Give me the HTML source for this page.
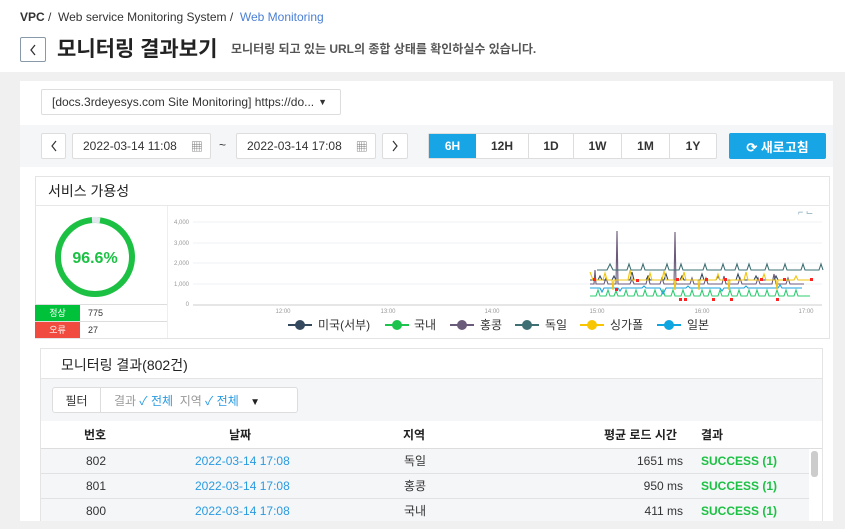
<!DOCTYPE html>
<html><head><meta charset="utf-8">
<style>
*{margin:0;padding:0;box-sizing:border-box}
body{width:845px;height:529px;overflow:hidden;background:#f0f0f0;font-family:"Liberation Sans","Noto Sans CJK KR",sans-serif;color:#333;position:relative}
.abs{position:absolute}
.hdr{left:0;top:0;width:845px;height:72px;background:#fff}
.btn{position:absolute;background:#fff;border:1px solid #ddd;border-radius:2px;font-size:12px;display:flex;align-items:center;justify-content:center}
.row{position:relative;height:25px;border-bottom:1px solid #e2e2e2;line-height:24px}
.row span{position:absolute;top:0}
</style></head><body>
<div class="abs hdr">
 <div class="abs" style="left:20px;top:10px;font-size:12px;color:#333"><b>VPC</b> / &nbsp;Web service Monitoring System / &nbsp;<span style="color:#4a7fd4">Web Monitoring</span></div>
 <div class="abs" style="left:20px;top:37px;width:26px;height:25px;border:1px solid #8899aa;border-radius:2px;display:flex;align-items:center;justify-content:center"><svg width="10" height="14"><path d="M7 2 L3 7 L7 12" fill="none" stroke="#333" stroke-width="1.3"/></svg></div>
 <div class="abs" style="left:57px;top:33px;font-size:21px;font-weight:bold;color:#222">모니터링 결과보기</div>
 <div class="abs" style="left:231px;top:40px;font-size:12px;color:#555;font-weight:bold">모니터링 되고 있는 URL의 종합 상태를 확인하실수 있습니다.</div>
</div>
<div class="abs" style="left:20px;top:81px;width:813px;height:448px;background:#fff"></div>
<div class="abs" style="left:20px;top:125px;width:813px;height:42px;background:#f5f6f8"></div>
<div class="btn" style="left:41px;top:89px;width:300px;height:26px;justify-content:flex-start;padding-left:10px;color:#333">[docs.3rdeyesys.com Site Monitoring] https://do...<span style="font-size:9px;margin-left:4px">▼</span></div>
<div class="btn" style="left:41px;top:133px;width:25px;height:26px"><svg width="10" height="14"><path d="M7 2 L3 7 L7 12" fill="none" stroke="#333" stroke-width="1.2"/></svg></div>
<div class="btn" style="left:72px;top:133px;width:139px;height:26px;justify-content:flex-start;padding-left:10px">2022-03-14 11:08<span style="margin-left:14px;color:#777">▦</span></div>
<div class="abs" style="left:219px;top:138px;font-size:12px">~</div>
<div class="btn" style="left:236px;top:133px;width:140px;height:26px;justify-content:flex-start;padding-left:10px">2022-03-14 17:08<span style="margin-left:14px;color:#777">▦</span></div>
<div class="btn" style="left:382px;top:133px;width:26px;height:26px"><svg width="10" height="14"><path d="M3 2 L7 7 L3 12" fill="none" stroke="#333" stroke-width="1.2"/></svg></div>
<div class="abs" style="left:428px;top:133px;width:289px;height:26px;display:flex;border:1px solid #ddd;border-radius:2px;background:#fff;font-size:12px;font-weight:bold">
 <div style="width:47px;background:#17a5e6;color:#fff;display:flex;align-items:center;justify-content:center">6H</div>
 <div style="width:53px;border-right:1px solid #ddd;display:flex;align-items:center;justify-content:center">12H</div>
 <div style="width:45px;border-right:1px solid #ddd;display:flex;align-items:center;justify-content:center">1D</div>
 <div style="width:48px;border-right:1px solid #ddd;display:flex;align-items:center;justify-content:center">1W</div>
 <div style="width:48px;border-right:1px solid #ddd;display:flex;align-items:center;justify-content:center">1M</div>
 <div style="flex:1;display:flex;align-items:center;justify-content:center">1Y</div>
</div>
<div class="abs" style="left:729px;top:133px;width:97px;height:26px;background:#17a5e6;border-radius:2px;color:#fff;font-size:13px;font-weight:bold;display:flex;align-items:center;justify-content:center">⟳ 새로고침</div>

<div class="abs" style="left:35px;top:176px;width:795px;height:163px;border:1px solid #e4e4e4;background:#fff"></div>
<div class="abs" style="left:35px;top:205px;width:795px;height:1px;background:#e8e8e8"></div>
<div class="abs" style="left:48px;top:181px;font-size:14px;color:#222">서비스 가용성</div>
<div class="abs" style="left:167px;top:206px;width:1px;height:132px;background:#eee"></div>
<svg class="abs" style="left:35px;top:206px" width="132" height="100"><circle cx="60" cy="51" r="37" fill="none" stroke="#1cc144" stroke-width="6"/><path d="M57 14 A37 37 0 0 1 65 14.3" fill="none" stroke="#e2e8ee" stroke-width="6"/><text x="60" y="57" text-anchor="middle" font-size="16" font-weight="bold" fill="#1cc144" font-family="Liberation Sans">96.6%</text></svg>
<div class="abs" style="left:35px;top:304px;width:132px;height:1px;background:#ddd"></div>
<div class="abs" style="left:35px;top:305px;width:45px;height:16px;background:#00c13a;color:#fff;font-size:9px;text-align:center;line-height:16px">정상</div>
<div class="abs" style="left:88px;top:305px;font-size:9px;line-height:16px">775</div>
<div class="abs" style="left:35px;top:321px;width:132px;height:1px;background:#ddd"></div>
<div class="abs" style="left:35px;top:322px;width:45px;height:16px;background:#f04b3e;color:#fff;font-size:9px;text-align:center;line-height:16px">오류</div>
<div class="abs" style="left:88px;top:322px;font-size:9px;line-height:16px">27</div>

<svg class="abs" style="left:0;top:0" width="845" height="345" font-family="Liberation Sans" font-size="6" fill="#999">
<g stroke="#eef0f5" stroke-width="1"><line x1="193" y1="222" x2="822" y2="222"/><line x1="193" y1="243" x2="822" y2="243"/><line x1="193" y1="263" x2="822" y2="263"/><line x1="193" y1="284" x2="822" y2="284"/></g>
<line x1="193" y1="305" x2="822" y2="305" stroke="#ccc"/>
<text x="189" y="224" text-anchor="end">4,000</text><text x="189" y="245" text-anchor="end">3,000</text><text x="189" y="265" text-anchor="end">2,000</text><text x="189" y="286" text-anchor="end">1,000</text><text x="189" y="306" text-anchor="end">0</text>
<g text-anchor="middle"><text x="283" y="313">12:00</text><text x="388" y="313">13:00</text><text x="492" y="313">14:00</text><text x="597" y="313">15:00</text><text x="702" y="313">16:00</text><text x="806" y="313">17:00</text></g>
<text x="798" y="215" font-size="9" fill="#8ab">⌐ ⌙</text>
<g fill="none" stroke-width="1.1">
<path stroke="#2ecc71" d="M590,296 h6 l2,-6 l2,6 h6 l2,-6 l2,6 h4 l2,-5 l2,5 h6 l2,-6 l2,6 h6 l2,-6 l2,6 h5 l2,-6 l2,6 h6 l2,-6 l2,6 h4 l2,-6 l2,6 h6 l2,-6 l2,6 h6 l2,-6 l2,6 h5 l2,-6 l2,6 h6 l2,-6 l2,6 h4 l2,-6 l2,6 h6 l2,-6 l2,6 h6 l2,-6 l2,6 h5 l2,-6 l2,6 h6 l2,-6 l2,6 h4 l2,-6 l2,6 h6 l2,-6 l2,6 h6 l2,-6 l2,6 h5 l2,-6 l2,6 h6 l2,-6 l2,6 h12"/>
<path stroke="#1ba3dd" d="M590,288 h10 l2,4 l2,-4 h14 l2,3 l2,-3 h20 l2,-2 l2,2 h14 l3,6 l3,-6 h20 l2,-2 l2,2 h30 l2,3 l2,-3 h20 l2,-2 l2,2 h30 l2,-3 l2,3 h20"/>
<path stroke="#6b5b7b" d="M590,284 h4 l1,-14 l1,14 h8 l2,-6 l2,6 h8 l1,-53 l1,53 h12 l2,-5 l2,5 h12 l2,-8 l2,8 h10 l2,-6 l2,6 h10 l1,-52 l1,52 h14 l2,-6 l2,6 h10 l2,-6 l2,6 h14 l2,-8 l2,8 h12 l2,-6 l2,6 h14 l2,-6 l2,6 h12 l2,-10 l2,10 h10 l2,-6 l2,6 h14"/>
<path stroke="#34495e" d="M590,280 h8 l2,-4 l2,4 h10 l2,-4 l2,4 h14 l2,-8 l2,8 h12 l2,-4 l2,4 h14 l2,-6 l2,6 h12 l2,-4 l2,4 h16 l2,-6 l2,6 h12 l2,-4 l2,4 h16 l2,-6 l2,6 h14 l2,-4 l2,4 h16 l2,-4 l2,4 h12"/>
<path stroke="#f1c40f" d="M590,272 l3,8 h10 l2,-7 l2,7 h5 l1,10 l1,-10 h14 l2,-10 l2,10 h16 l2,-7 l2,7 h10 l2,-9 l2,9 h8 l1,10 l1,-10 h6 l2,-8 l2,8 h12 l1,10 l1,-10 h16 l2,-6 l2,6 h8 l1,10 l1,-10 h14 l2,-8 l2,8 h14 l2,-6 l2,6 h10 l1,10 l1,-10 h16 l2,-4 l2,4 h14"/>
<path stroke="#3d6f73" d="M597,270 h10 l3,-6 l3,6 h14 l2,-6 l2,6 h10 l2,-6 l2,6 h20 l2,-6 l2,6 h10 l2,-6 l2,6 h20 l2,-6 l2,6 h14 l2,-6 l2,6 h10 l2,-6 l2,6 h8 l2,-6 l2,6 h14 l2,-6 l2,6 h14 l2,-6 l2,6 h14 l2,-6 l2,6 h14 l2,-6 l2,6"/>
</g>
<g fill="#f22"><rect x="593" y="278" width="3" height="3"/><rect x="615" y="288" width="3" height="3"/><rect x="636" y="279" width="3" height="3"/><rect x="676" y="278" width="3" height="3"/><rect x="679" y="298" width="3" height="3"/><rect x="684" y="298" width="3" height="3"/><rect x="705" y="278" width="3" height="3"/><rect x="712" y="298" width="3" height="3"/><rect x="724" y="278" width="3" height="3"/><rect x="730" y="298" width="3" height="3"/><rect x="760" y="278" width="3" height="3"/><rect x="776" y="298" width="3" height="3"/><rect x="783" y="278" width="3" height="3"/><rect x="810" y="278" width="3" height="3"/></g>
<g font-size="12" fill="#333" font-family="Liberation Sans,Noto Sans CJK KR">
<line x1="288" y1="325" x2="312" y2="325" stroke="#34495e" stroke-width="2"/><circle cx="300" cy="325" r="5" fill="#34495e"/><text x="318" y="329">미국(서부)</text>
<line x1="385" y1="325" x2="409" y2="325" stroke="#1cc44e" stroke-width="2"/><circle cx="397" cy="325" r="5" fill="#1cc44e"/><text x="414" y="329">국내</text>
<line x1="450" y1="325" x2="474" y2="325" stroke="#6b5b7b" stroke-width="2"/><circle cx="462" cy="325" r="5" fill="#6b5b7b"/><text x="480" y="329">홍콩</text>
<line x1="515" y1="325" x2="539" y2="325" stroke="#3d6f73" stroke-width="2"/><circle cx="527" cy="325" r="5" fill="#3d6f73"/><text x="545" y="329">독일</text>
<line x1="580" y1="325" x2="604" y2="325" stroke="#f7c600" stroke-width="2"/><circle cx="592" cy="325" r="5" fill="#f7c600"/><text x="610" y="329">싱가폴</text>
<line x1="657" y1="325" x2="681" y2="325" stroke="#0ea5e0" stroke-width="2"/><circle cx="669" cy="325" r="5" fill="#0ea5e0"/><text x="687" y="329">일본</text>
</g>
</svg>

<div class="abs" style="left:40px;top:348px;width:783px;height:181px;border:1px solid #e4e4e4;background:#fff"></div>
<div class="abs" style="left:41px;top:378px;width:781px;height:43px;background:#f5f6f8;border-top:1px solid #e4e4e4"></div>
<div class="abs" style="left:61px;top:355px;font-size:14px;color:#222">모니터링 결과(802건)</div>
<div class="abs" style="left:52px;top:387px;width:246px;height:26px;background:#fff;border:1px solid #ddd;border-radius:3px;font-size:12px;display:flex;align-items:center">
 <div style="width:48px;border-right:1px solid #ddd;height:100%;display:flex;align-items:center;justify-content:center">필터</div>
 <div style="padding-left:13px;color:#999">결과 <span style="color:#2a9be0">✓ 전체</span>&nbsp; 지역 <span style="color:#2a9be0">✓ 전체</span> <span style="color:#222;font-size:10px;margin-left:8px">▼</span></div>
</div>
<div class="abs" style="left:41px;top:421px;width:781px;height:28px;font-size:12px;font-weight:bold;color:#222;border-bottom:1px solid #ddd;line-height:28px">
 <span class="abs" style="left:43px;top:0">번호</span><span class="abs" style="left:188px;top:0">날짜</span><span class="abs" style="left:362px;top:0">지역</span><span class="abs" style="left:563px;top:0">평균 로드 시간</span><span class="abs" style="left:660px;top:0">결과</span>
</div>
<div class="abs" style="left:41px;top:449px;width:768px;height:80px;background:#f5f6f8;font-size:12px">
 <div class="row"><span style="left:45px">802</span><span style="left:154px;color:#2a9be0">2022-03-14 17:08</span><span style="left:363px">독일</span><span style="right:126px">1651 ms</span><span style="left:660px;color:#1cc144;font-weight:bold">SUCCESS (1)</span></div>
 <div class="row"><span style="left:45px">801</span><span style="left:154px;color:#2a9be0">2022-03-14 17:08</span><span style="left:363px">홍콩</span><span style="right:126px">950 ms</span><span style="left:660px;color:#1cc144;font-weight:bold">SUCCESS (1)</span></div>
 <div class="row" style="border:none"><span style="left:45px">800</span><span style="left:154px;color:#2a9be0">2022-03-14 17:08</span><span style="left:363px">국내</span><span style="right:126px">411 ms</span><span style="left:660px;color:#1cc144;font-weight:bold">SUCCESS (1)</span></div>
</div>
<div class="abs" style="left:809px;top:449px;width:13px;height:80px;background:#fff"></div>
<div class="abs" style="left:811px;top:451px;width:7px;height:26px;background:#ccc;border-radius:3px"></div>
<div class="abs" style="left:0;top:521px;width:845px;height:8px;background:#f0f0f0"></div>
</body></html>
